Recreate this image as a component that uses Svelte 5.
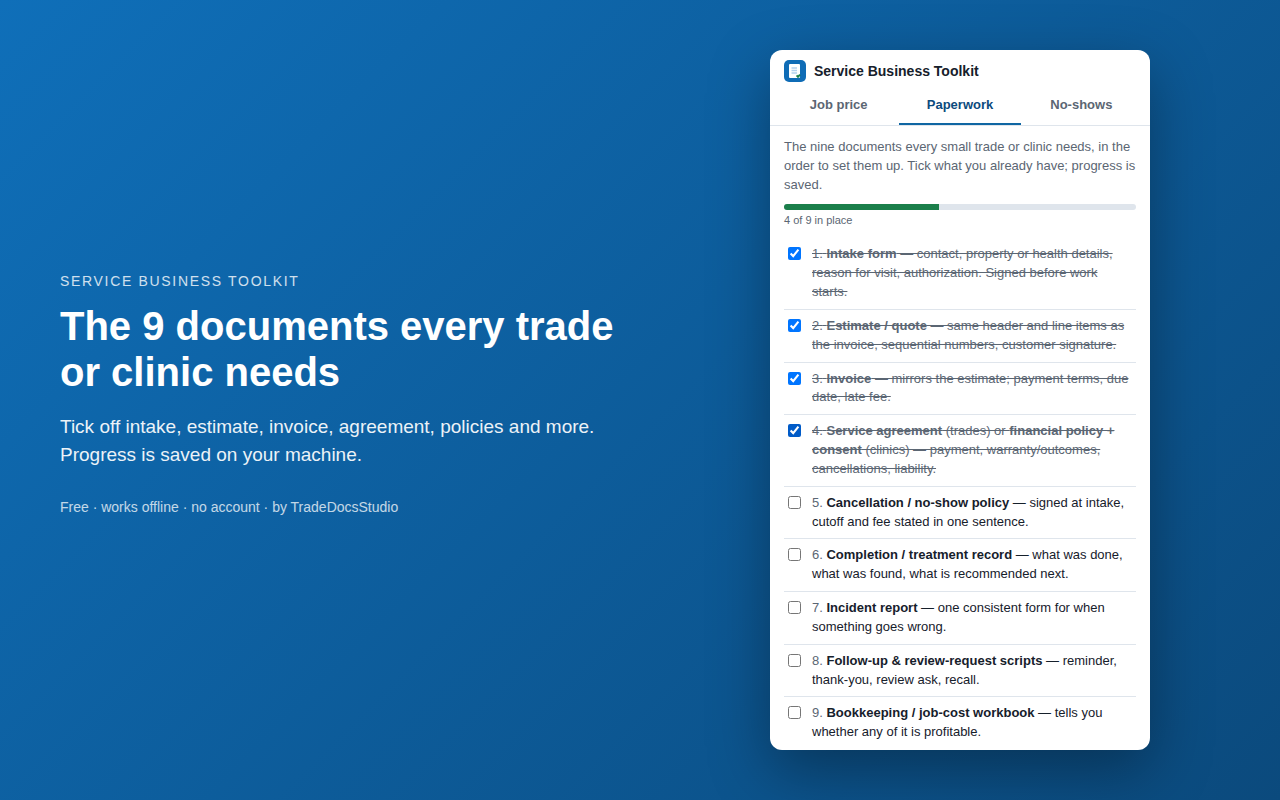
<script lang="ts">
	type DocPart = {
		text: string;
		bold?: boolean;
	};

	type DocItem = {
		id: number;
		done: boolean;
		parts: DocPart[];
	};

	const tabs = ['Job price', 'Paperwork', 'No-shows'];

	let activeTab = $state('Paperwork');
	let latestId = $state(4);

	let items = $state<DocItem[]>([
		{
			id: 1,
			done: true,
			parts: [
				{ text: 'Intake form', bold: true },
				{
					text: ' — contact, property or health details, reason for visit, authorization. Signed before work starts.'
				}
			]
		},
		{
			id: 2,
			done: true,
			parts: [
				{ text: 'Estimate / quote', bold: true },
				{
					text: ' — same header and line items as the invoice, sequential numbers, customer signature.'
				}
			]
		},
		{
			id: 3,
			done: true,
			parts: [
				{ text: 'Invoice', bold: true },
				{ text: ' — mirrors the estimate; payment terms, due date, late fee.' }
			]
		},
		{
			id: 4,
			done: true,
			parts: [
				{ text: 'Service agreement', bold: true },
				{ text: ' (trades) or ' },
				{ text: 'financial policy + consent', bold: true },
				{ text: ' (clinics) — payment, warranty/outcomes, cancellations, liability.' }
			]
		},
		{
			id: 5,
			done: false,
			parts: [
				{ text: 'Cancellation / no-show policy', bold: true },
				{ text: ' — signed at intake, cutoff and fee stated in one sentence.' }
			]
		},
		{
			id: 6,
			done: false,
			parts: [
				{ text: 'Completion / treatment record', bold: true },
				{ text: ' — what was done, what was found, what is recommended next.' }
			]
		},
		{
			id: 7,
			done: false,
			parts: [
				{ text: 'Incident report', bold: true },
				{ text: ' — one consistent form for when something goes wrong.' }
			]
		},
		{
			id: 8,
			done: false,
			parts: [
				{ text: 'Follow-up & review-request scripts', bold: true },
				{ text: ' — reminder, thank-you, review ask, recall.' }
			]
		},
		{
			id: 9,
			done: false,
			parts: [
				{ text: 'Bookkeeping / job-cost workbook', bold: true },
				{ text: ' — tells you whether any of it is profitable.' }
			]
		}
	]);

	const doneCount = $derived(items.filter((item) => item.done).length);
	const percent = $derived(Math.round((doneCount / items.length) * 100));
</script>

<main class="promo">
	<section class="pitch">
		<p class="pitch__eyebrow">Service Business Toolkit</p>
		<h1 class="pitch__title">The 9 documents every trade or clinic needs</h1>
		<p class="pitch__lead">
			Tick off intake, estimate, invoice, agreement, policies and more. Progress is saved on your
			machine.
		</p>
		<p class="pitch__note">Free · works offline · no account · by TradeDocsStudio</p>
	</section>

	<section class="panel" aria-label="Service Business Toolkit">
		<header class="panel__header">
			<svg class="panel__logo" viewBox="0 0 22 22" aria-hidden="true">
				<rect width="22" height="22" rx="5" fill="#0f6cb6" />
				<rect x="5" y="4" width="11" height="14" rx="1" fill="#fff" />
				<path d="M7.5 8h5.5M7.5 10.5h5.5M7.5 13h5.5" stroke="#b4d2ee" stroke-width="1.4" />
				<path d="M12.6 15.4l1.4 1.5 2-2.2" fill="none" stroke="#1b7f4b" stroke-width="1.9" />
			</svg>
			<h2 class="panel__name">Service Business Toolkit</h2>
		</header>

		<div class="tabs" role="tablist">
			{#each tabs as tab (tab)}
				<button
					type="button"
					role="tab"
					class="tabs__tab"
					class:is-active={activeTab === tab}
					aria-selected={activeTab === tab}
					onclick={() => {
						activeTab = tab;
					}}
				>
					{tab}
				</button>
			{/each}
		</div>

		<div class="panel__body">
			<p class="intro">
				The nine documents every small trade or clinic needs, in the order to set them up. Tick what
				you already have; progress is saved.
			</p>

			<div
				class="progress"
				role="progressbar"
				aria-label="Documents in place"
				aria-valuemin="0"
				aria-valuemax={items.length}
				aria-valuenow={doneCount}
			>
				<div class="progress__fill" style={`width:${percent}%`}></div>
			</div>
			<p class="progress-label">{doneCount} of {items.length} in place</p>

			<ul class="docs">
				{#each items as item (item.id)}
					<li class="docs__item">
						<input
							id={`doc-${item.id}`}
							type="checkbox"
							class:is-latest={item.id === latestId}
							bind:checked={item.done}
							onchange={() => {
								latestId = item.id;
							}}
						/>
						<label for={`doc-${item.id}`} class:is-done={item.done}>
							<span class="docs__number">{item.id}.</span>
							{#each item.parts as part}{#if part.bold}<b>{part.text}</b>{:else}{part.text}{/if}{/each}
						</label>
					</li>
				{/each}
			</ul>
		</div>
	</section>
</main>

<style>
	:global(body) {
		margin: 0;
	}

	.promo {
		display: grid;
		grid-template-columns: 1fr 1fr;
		align-items: center;
		box-sizing: border-box;
		min-height: 100vh;
		background: linear-gradient(135deg, #0f6fb9, #0b4a7d);
		font-family: 'Liberation Sans', Arial, sans-serif;
		color: #fff;
	}

	.pitch {
		padding: 0 0 12px 60px;
	}

	.pitch__eyebrow {
		margin: 0 0 14px;
		font-size: 14px;
		line-height: 16px;
		letter-spacing: 0.12em;
		text-transform: uppercase;
		opacity: 0.8;
	}

	.pitch__title {
		margin: 0 0 18px;
		font-size: 40px;
		font-weight: 700;
		line-height: 46px;
	}

	.pitch__lead {
		margin: 0;
		font-size: 19px;
		line-height: 28px;
		opacity: 0.92;
	}

	.pitch__note {
		margin: 30px 0 0;
		font-size: 14px;
		line-height: 16px;
		opacity: 0.75;
	}

	.panel {
		justify-self: center;
		width: 380px;
		max-width: 100%;
		overflow: hidden;
		border-radius: 12px;
		background: #fff;
		box-shadow: 0 20px 60px rgba(0, 0, 0, 0.35);
		color: #16202b;
		font-size: 13px;
		line-height: 1.45;
	}

	.panel__header {
		display: flex;
		align-items: center;
		gap: 8px;
		padding: 10px 14px 4px;
	}

	.panel__logo {
		width: 22px;
		height: 22px;
	}

	.panel__name {
		margin: 0;
		font-size: 14px;
		font-weight: 700;
	}

	.tabs {
		display: flex;
		padding: 0 8px;
		border-bottom: 1px solid #dfe5ec;
	}

	.tabs__tab {
		flex: 1;
		padding: 12px 4px 11px;
		border: 0;
		border-bottom: 2px solid transparent;
		background: none;
		color: #5b6673;
		font: inherit;
		font-weight: 700;
		line-height: 14px;
		cursor: pointer;
	}

	.tabs__tab.is-active {
		border-bottom-color: #0f66a3;
		color: #0b4a7d;
	}

	.panel__body {
		padding: 12px 14px 0;
	}

	.intro {
		margin: 0 0 10px;
		color: #5b6673;
	}

	.progress {
		height: 6px;
		overflow: hidden;
		border-radius: 3px;
		background: #dfe5ec;
	}

	.progress__fill {
		height: 100%;
		background: #1b7f4b;
	}

	.progress-label {
		margin: 3px 0 9px;
		color: #5b6673;
		font-size: 11px;
	}

	.docs {
		margin: 0;
		padding: 0;
		list-style: none;
	}

	.docs__item {
		display: flex;
		align-items: flex-start;
		gap: 8px;
		padding: 7px 0;
		border-bottom: 1px solid #dfe5ec;
	}

	.docs__item:last-child {
		padding-bottom: 8px;
		border-bottom: 0;
	}

	.docs__item input {
		flex: none;
		margin: 2px 3px 3px 4px;
	}

	.docs__item input.is-latest {
		accent-color: #005bc8;
	}

	.docs__number {
		color: #5b6673;
	}

	.is-done {
		color: #5b6673;
		text-decoration: line-through;
	}
</style>
